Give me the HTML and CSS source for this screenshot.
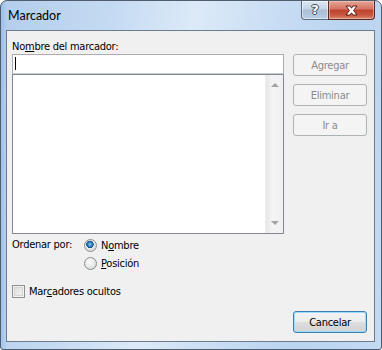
FILE: index.html
```html
<!DOCTYPE html>
<html lang="es">

<head>
    <meta charset="UTF-8">
    <title>Marcador</title>
    <link rel="stylesheet" href="styles.css">
</head>

<body>

    <div class="window">
        <div class="titlebar">
            <span class="title">Marcador</span>
            <div class="caption-buttons">
                <div class="cap-btn help"><span>?</span></div>
                <div class="cap-btn close">
                    <svg width="17" height="11" viewBox="0 0 17 11">
                        <path d="M3 1 L7 1 L8.5 3.2 L10 1 L14 1 L10.6 5.5 L14 10 L10 10 L8.5 7.8 L7 10 L3 10 L6.4 5.5 Z"
                            fill="#fff" stroke="#5a1a14" stroke-width="1" stroke-linejoin="round" />
                    </svg>
                </div>
            </div>
        </div>

        <div class="client">
            <div class="top">
                <div class="left-col">
                    <div class="label">No<u>m</u>bre del marcador:</div>
                    <div class="textbox"><span class="caret"></span></div>
                    <div class="listbox">
                        <div class="list-area"></div>
                        <div class="scrollbar">
                            <span class="arrow up"></span>
                            <span class="arrow down"></span>
                        </div>
                    </div>
                </div>
                <div class="right-col">
                    <button class="btn" disabled>Agregar</button>
                    <button class="btn" disabled>Eliminar</button>
                    <button class="btn" disabled>Ir a</button>
                </div>
            </div>

            <div class="sort">
                <span class="sort-label">Ordenar por:</span>
                <div class="radios">
                    <div class="option"><span class="radio checked"></span><span>N<u>o</u>mbre</span></div>
                    <div class="option"><span class="radio"></span><span><u>P</u>osición</span></div>
                </div>
            </div>

            <div class="option check-row"><span class="checkbox"></span><span>Mar<u>c</u>adores ocultos</span></div>

            <div class="footer">
                <button class="btn default">Cancelar</button>
            </div>
        </div>
    </div>

</body>

</html>
```

FILE: styles.css
```css
html,
body {
    margin: 0;
    background: #fff;
}

body {
    font-family: "DejaVu Sans Condensed", "DejaVu Sans", sans-serif;
    font-size: 11px;
    letter-spacing: -0.25px;
    color: #000;
}

u {
    text-decoration: underline;
    text-underline-offset: 1px;
}

.window {
    width: 382px;
    height: 350px;
    box-sizing: border-box;
    border: 1px solid #4f5d6c;
    border-radius: 7px 7px 3px 3px;
    padding: 0 6px 7px 5px;
    display: flex;
    flex-direction: column;
    background:
        linear-gradient(90deg, rgba(140, 183, 235, 0.6) 0, rgba(140, 183, 235, 0) 6px),
        linear-gradient(100deg, #b3cdec 0%, #c4daf2 25%, #dceaf8 45%, #cbdff4 60%, #bad3ef 80%, #c3daf3 100%);
}

/* title bar */

.titlebar {
    height: 29px;
    display: flex;
    justify-content: space-between;
    align-items: flex-start;
    flex-shrink: 0;
}

.title {
    font-family: "Lato", "Open Sans", sans-serif;
    font-size: 12.5px;
    letter-spacing: 0;
    margin: 7px 0 0 2px;
    color: #000;
}

.caption-buttons {
    display: flex;
}

.cap-btn {
    height: 19px;
    box-sizing: border-box;
    border: 1px solid #5b6c80;
    border-top: none;
    display: flex;
    align-items: center;
    justify-content: center;
}

.help {
    width: 27px;
    border-right: none;
    border-radius: 0 0 0 4px;
    background: linear-gradient(#dde7f3 0%, #c4d3e6 45%, #a9bdd6 50%, #b9cde3 100%);
    box-shadow: inset 0 0 0 1px rgba(255, 255, 255, 0.5);
}

.help span {
    font-family: "DejaVu Sans", sans-serif;
    font-weight: bold;
    font-size: 13px;
    letter-spacing: 0;
    color: #fff;
    text-shadow: 1px 0 #3c4b5d, -1px 0 #3c4b5d, 0 1px #3c4b5d, 0 -1px #3c4b5d;
    line-height: 1;
    margin-top: -1px;
}

.close {
    width: 47px;
    border-color: #5a2a24;
    border-radius: 0 0 4px 0;
    background: linear-gradient(#e5a595 0%, #d47363 45%, #c0412d 50%, #c95a43 80%, #d98a6f 100%);
    box-shadow: inset 0 0 0 1px rgba(255, 220, 210, 0.45);
}

/* client area */

.client {
    flex: 1;
    background: #f0f0f0;
    border: 1px solid #6d7c8d;
    padding: 8px 7px 0 5px;
    display: flex;
    flex-direction: column;
}

.top {
    display: flex;
    gap: 9px;
}

.left-col {
    width: 272px;
    display: flex;
    flex-direction: column;
}

.label {
    height: 15px;
    line-height: 15px;
}

.textbox {
    height: 20px;
    box-sizing: border-box;
    background: #fff;
    border: 1px solid #abadb3;
    border-bottom-color: #c9ccd3;
    padding: 2px 0 0 2px;
}

.caret {
    display: block;
    width: 1px;
    height: 13px;
    background: #000;
}

.listbox {
    height: 160px;
    box-sizing: border-box;
    background: #fff;
    border: 1px solid #828790;
    display: flex;
}

.list-area {
    flex: 1;
}

.scrollbar {
    width: 17px;
    background: linear-gradient(90deg, #e7e7e7, #f4f4f4 40%, #f0f0f0);
    border-left: 1px solid #ededed;
    display: flex;
    flex-direction: column;
    justify-content: space-between;
    align-items: center;
    padding: 8px 0 8px;
}

.arrow {
    width: 0;
    height: 0;
    border-left: 4px solid transparent;
    border-right: 4px solid transparent;
}

.arrow.up {
    border-bottom: 4px solid #a3a3a3;
}

.arrow.down {
    border-top: 4px solid #a3a3a3;
}

.right-col {
    padding-top: 15px;
    display: flex;
    flex-direction: column;
    gap: 8px;
}

.btn {
    width: 74px;
    height: 22px;
    box-sizing: border-box;
    font-family: inherit;
    font-size: 11px;
    letter-spacing: inherit;
    border-radius: 3px;
    padding: 0;
    border: 1px solid #707070;
    background: linear-gradient(#f2f2f2 0%, #ebebeb 49%, #dddddd 50%, #cfcfcf 100%);
    color: #000;
}

.btn:disabled {
    border-color: #adb2b5;
    background: #f4f4f4;
    color: #8b8b8b;
}

.btn.default {
    border-color: #3c7fb1;
    box-shadow: inset 0 0 0 1px #9fdcfb;
    background: linear-gradient(#f3f3f3 0%, #ececec 49%, #dedede 50%, #d2d2d2 100%);
}

/* sort options */

.sort {
    display: flex;
    margin-top: 2px;
}

.sort-label {
    width: 72px;
    line-height: 18px;
}

.option {
    height: 18px;
    display: flex;
    align-items: center;
    gap: 4px;
}

.radio {
    width: 13px;
    height: 13px;
    box-sizing: border-box;
    border-radius: 50%;
    border: 1px solid #8a8c8e;
    background: radial-gradient(circle at 40% 35%, #ffffff 0, #e2e3e4 60%, #cdcfd1 100%);
}

.radio.checked {
    background:
        radial-gradient(circle at 45% 40%, #8fd0f8 0, #2e86c8 2px, #1c5180 3.5px, transparent 4px),
        radial-gradient(circle at 40% 35%, #ffffff 0, #e2e3e4 60%, #cdcfd1 100%);
}

.check-row {
    margin-top: 10px;
    gap: 4px;
}

.checkbox {
    width: 13px;
    height: 13px;
    box-sizing: border-box;
    border: 1px solid #8f8f8f;
    background: linear-gradient(135deg, #d9d9d9, #f6f6f6);
    box-shadow: inset 0 0 0 1px #f4f4f4, inset 0 0 0 2px #d4d4d4;
}

.footer {
    margin-top: 11px;
    display: flex;
    justify-content: flex-end;
}
```
